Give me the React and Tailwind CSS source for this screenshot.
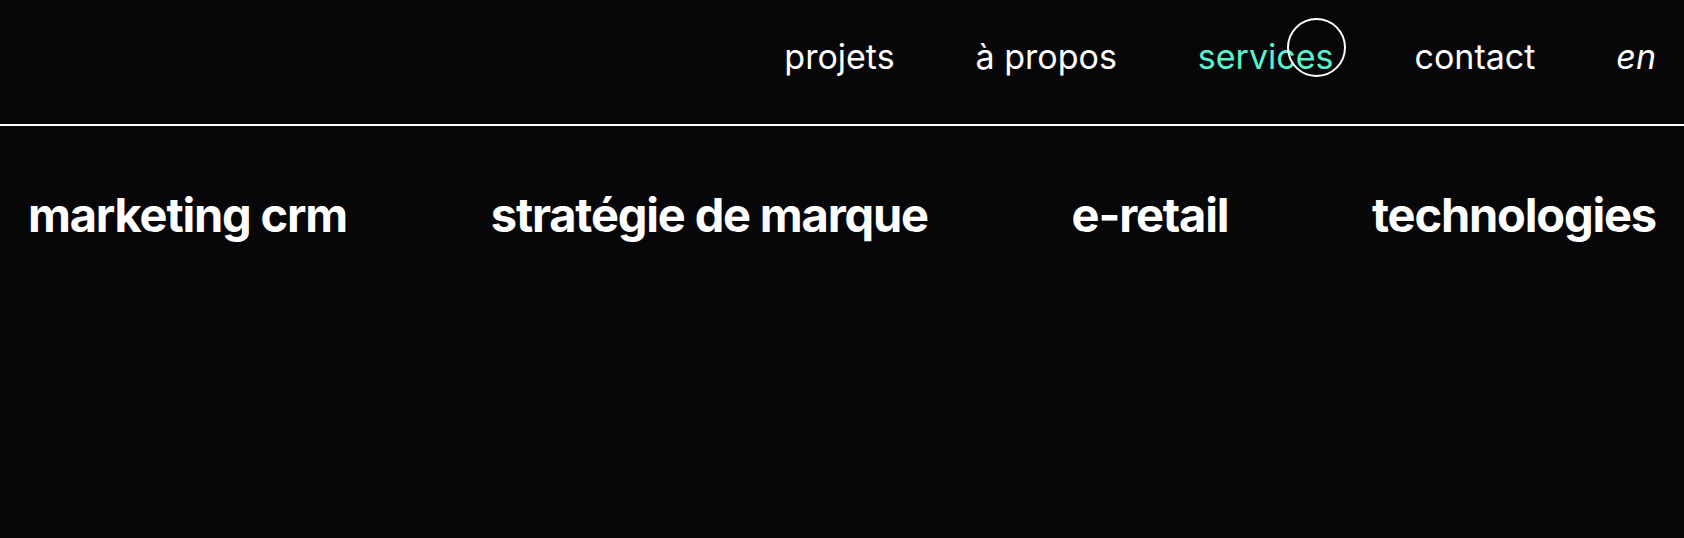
import React from 'react';

const navLinks = [
  { label: 'projets' },
  { label: 'à propos' },
  { label: 'services', active: true },
  { label: 'contact' },
];

const services = ['marketing crm', 'stratégie de marque', 'e-retail', 'technologies'];

const App = () => {
  return (
    <div
      className="relative min-h-[538px] w-full bg-[#070709] text-white"
      style={{ fontFamily: 'Inter, "Noto Sans", sans-serif' }}
    >
      {/* top bar */}
      <header className="flex h-[124px] items-center justify-end px-7 pb-[12px]">
        <nav className="flex items-center gap-[81px] text-[34px]">
          {navLinks.map((link) => (
            <a
              key={link.label}
              href="#"
              className={link.active ? 'text-[#5af2cc]' : 'text-white'}
            >
              {link.label}
            </a>
          ))}
          <a href="#" className="italic text-white">en</a>
        </nav>
      </header>

      <div className="h-[2px] w-full bg-white" />

      {/* services row */}
      <section className="flex items-start justify-between px-7 pt-[65px]">
        {services.map((name) => (
          <h2 key={name} className="text-[47px] font-bold leading-none tracking-[-0.025em]">
            {name}
          </h2>
        ))}
      </section>

      {/* custom cursor ring */}
      <span className="pointer-events-none absolute left-[1287px] top-[18px] h-[59px] w-[59px] rounded-full border-2 border-white" />
    </div>
  );
};

export default App;
